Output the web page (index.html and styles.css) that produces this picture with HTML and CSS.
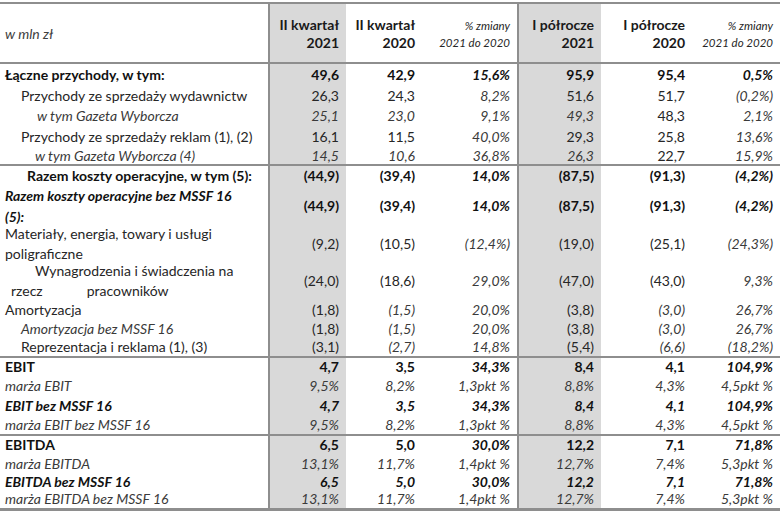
FILE: index.html
```html
<!DOCTYPE html>
<html lang="pl">
<head>
<meta charset="utf-8">
<title>Wyniki</title>
<link rel="stylesheet" href="styles.css">
</head>
<body>
<table class="fin">
  <colgroup>
    <col class="c-label">
    <col class="c-q21">
    <col class="c-q20">
    <col class="c-qp">
    <col class="c-h21">
    <col class="c-h20">
    <col class="c-hp">
  </colgroup>
  <thead>
    <tr class="head">
      <th class="lbl unit">w mln zł</th>
      <th class="hl sep">II kwartał<br>2021</th>
      <th>II kwartał<br>2020</th>
      <th class="small">% zmiany<br>2021 do 2020</th>
      <th class="hl sep">I półrocze<br>2021</th>
      <th>I półrocze<br>2020</th>
      <th class="small">% zmiany<br>2021 do 2020</th>
    </tr>
  </thead>
  <tbody class="s1">
    <tr class="h22">
      <td class="lbl b">Łączne przychody, w tym:</td>
      <td class="hl sep b">49,6</td><td class="b">42,9</td><td class="b i">15,6%</td>
      <td class="hl sep b">95,9</td><td class="b">95,4</td><td class="b i">0,5%</td>
    </tr>
    <tr class="h21">
      <td class="lbl ind1">Przychody ze sprzedaży wydawnictw</td>
      <td class="hl sep">26,3</td><td>24,3</td><td class="i">8,2%</td>
      <td class="hl sep">51,6</td><td>51,7</td><td class="i">(0,2%)</td>
    </tr>
    <tr class="h20">
      <td class="lbl i ind2">w tym Gazeta Wyborcza</td>
      <td class="hl sep i">25,1</td><td class="i">23,0</td><td class="i">9,1%</td>
      <td class="hl sep i">49,3</td><td>48,3</td><td class="i">2,1%</td>
    </tr>
    <tr class="h21">
      <td class="lbl ind1">Przychody ze sprzedaży reklam (1), (2)</td>
      <td class="hl sep">16,1</td><td>11,5</td><td class="i">40,0%</td>
      <td class="hl sep">29,3</td><td>25,8</td><td class="i">13,6%</td>
    </tr>
    <tr class="h18">
      <td class="lbl i ind2b">w tym Gazeta Wyborcza (4)</td>
      <td class="hl sep i">14,5</td><td class="i">10,6</td><td class="i">36,8%</td>
      <td class="hl sep i">26,3</td><td>22,7</td><td class="i">15,9%</td>
    </tr>
  </tbody>
  <tbody class="s2">
    <tr class="h21">
      <td class="lbl b ind3">Razem koszty operacyjne, w tym (5):</td>
      <td class="hl sep b">(44,9)</td><td class="b">(39,4)</td><td class="b i">14,0%</td>
      <td class="hl sep b">(87,5)</td><td class="b">(91,3)</td><td class="b i">(4,2%)</td>
    </tr>
    <tr class="h39">
      <td class="lbl b i"><div class="tw tw-b">Razem koszty operacyjne bez MSSF 16<br>(5):</div></td>
      <td class="hl sep b">(44,9)</td><td class="b">(39,4)</td><td class="b i">14,0%</td>
      <td class="hl sep b">(87,5)</td><td class="b">(91,3)</td><td class="b i">(4,2%)</td>
    </tr>
    <tr class="h37">
      <td class="lbl"><div class="tw">Materiały, energia, towary i usługi<br>poligraficzne</div></td>
      <td class="hl sep">(9,2)</td><td>(10,5)</td><td class="i">(12,4%)</td>
      <td class="hl sep">(19,0)</td><td>(25,1)</td><td class="i">(24,3%)</td>
    </tr>
    <tr class="h38">
      <td class="lbl"><div class="tw"><span class="wl1">Wynagrodzenia i świadczenia na</span><br><span class="wl2a">rzecz</span><span class="wl2b">pracowników</span></div></td>
      <td class="hl sep">(24,0)</td><td>(18,6)</td><td class="i">29,0%</td>
      <td class="hl sep">(47,0)</td><td>(43,0)</td><td class="i">9,3%</td>
    </tr>
    <tr class="h19">
      <td class="lbl">Amortyzacja</td>
      <td class="hl sep">(1,8)</td><td class="i">(1,5)</td><td class="i">20,0%</td>
      <td class="hl sep">(3,8)</td><td class="i">(3,0)</td><td class="i">26,7%</td>
    </tr>
    <tr class="h19">
      <td class="lbl i ind1">Amortyzacja bez MSSF 16</td>
      <td class="hl sep">(1,8)</td><td class="i">(1,5)</td><td class="i">20,0%</td>
      <td class="hl sep">(3,8)</td><td class="i">(3,0)</td><td class="i">26,7%</td>
    </tr>
    <tr class="h19">
      <td class="lbl ind1">Reprezentacja i reklama (1), (3)</td>
      <td class="hl sep">(3,1)</td><td class="i">(2,7)</td><td class="i">14,8%</td>
      <td class="hl sep">(5,4)</td><td class="i">(6,6)</td><td class="i">(18,2%)</td>
    </tr>
  </tbody>
  <tbody class="s3">
    <tr class="h19">
      <td class="lbl b">EBIT</td>
      <td class="hl sep b">4,7</td><td class="b">3,5</td><td class="b i">34,3%</td>
      <td class="hl sep b">8,4</td><td class="b">4,1</td><td class="b i">104,9%</td>
    </tr>
    <tr class="h20">
      <td class="lbl i">marża EBIT</td>
      <td class="hl sep i">9,5%</td><td class="i">8,2%</td><td class="i">1,3pkt %</td>
      <td class="hl sep i">8,8%</td><td class="i">4,3%</td><td class="i">4,5pkt %</td>
    </tr>
    <tr class="h19">
      <td class="lbl b i">EBIT bez MSSF 16</td>
      <td class="hl sep b i">4,7</td><td class="b i">3,5</td><td class="b i">34,3%</td>
      <td class="hl sep b i">8,4</td><td class="b i">4,1</td><td class="b i">104,9%</td>
    </tr>
    <tr class="h20">
      <td class="lbl i">marża EBIT bez MSSF 16</td>
      <td class="hl sep i">9,5%</td><td class="i">8,2%</td><td class="i">1,3pkt %</td>
      <td class="hl sep i">8,8%</td><td class="i">4,3%</td><td class="i">4,5pkt %</td>
    </tr>
  </tbody>
  <tbody class="s4">
    <tr class="h19">
      <td class="lbl b">EBITDA</td>
      <td class="hl sep b">6,5</td><td class="b">5,0</td><td class="b i">30,0%</td>
      <td class="hl sep b">12,2</td><td class="b">7,1</td><td class="b i">71,8%</td>
    </tr>
    <tr class="h19">
      <td class="lbl i">marża EBITDA</td>
      <td class="hl sep i">13,1%</td><td class="i">11,7%</td><td class="i">1,4pkt %</td>
      <td class="hl sep i">12,7%</td><td class="i">7,4%</td><td class="i">5,3pkt %</td>
    </tr>
    <tr class="h18">
      <td class="lbl b i">EBITDA bez MSSF 16</td>
      <td class="hl sep b i">6,5</td><td class="b i">5,0</td><td class="b i">30,0%</td>
      <td class="hl sep b i">12,2</td><td class="b i">7,1</td><td class="b i">71,8%</td>
    </tr>
    <tr class="h18">
      <td class="lbl i">marża EBITDA bez MSSF 16</td>
      <td class="hl sep i">13,1%</td><td class="i">11,7%</td><td class="i">1,4pkt %</td>
      <td class="hl sep i">12,7%</td><td class="i">7,4%</td><td class="i">5,3pkt %</td>
    </tr>
  </tbody>
</table>
</body>
</html>
```
FILE: styles.css
```css
html, body {
  margin: 0;
  padding: 0;
  background: #ffffff;
}

body {
  padding-top: 2px;
  font-family: Lato, "Open Sans", "Liberation Sans", sans-serif;
  font-size: 14px;
  color: #262626;
}

.fin {
  border-collapse: collapse;
  table-layout: fixed;
  width: 780px;
  border-top: 2px solid #8e8e8e;
  border-bottom: 3px solid #8e8e8e;
}

.c-label { width: 269px; }
.c-q21 { width: 77px; }
.c-q20 { width: 76px; }
.c-qp { width: 96px; }
.c-h21 { width: 83px; }
.c-h20 { width: 91px; }
.c-hp { width: 88px; }

.fin th,
.fin td {
  padding: 0 7px 0 5px;
  text-align: right;
  vertical-align: middle;
  white-space: nowrap;
  line-height: 16px;
  font-weight: normal;
}

.fin th {
  font-weight: bold;
  color: #1a1a1a;
  line-height: 18px;
  padding-top: 2px;
}

.fin th.small {
  font-size: 11.5px;
  font-style: italic;
  font-weight: normal;
  line-height: 17px;
  color: #262626;
}

.fin th.unit {
  font-weight: normal;
  font-style: italic;
  font-size: 14px;
  color: #404040;
}

.fin .lbl {
  text-align: left;
}

.fin .sep {
  border-left: 2px solid #8e8e8e;
}

.fin .hl {
  background: #d9d9d9;
}

.fin tbody {
  border-top: 2px solid #8e8e8e;
}

.head { height: 60px; }
.h22 { height: 22px; }
.h21 { height: 21px; }
.h20 { height: 20px; }
.h19 { height: 19px; }
.h18 { height: 18px; }
.h37 { height: 37px; }
.h38 { height: 38px; }
.h39 { height: 39px; }

.fin .b {
  font-weight: bold;
  color: #111111;
}

.fin .i {
  font-style: italic;
}

.fin td.i:not(.b) {
  color: #3a3a3a;
}

.ind1 { padding-left: 21px !important; }
.ind2 { padding-left: 37px !important; }
.ind2b { padding-left: 35px !important; }
.ind3 { padding-left: 27px !important; }

.tw {
  line-height: 20px;
  margin: -3px 0;
}

.tw-b {
  line-height: 21px;
}

.wl1 { padding-left: 30px; }
.wl2a { padding-left: 6px; }
.wl2b { padding-left: 44px; }
```
